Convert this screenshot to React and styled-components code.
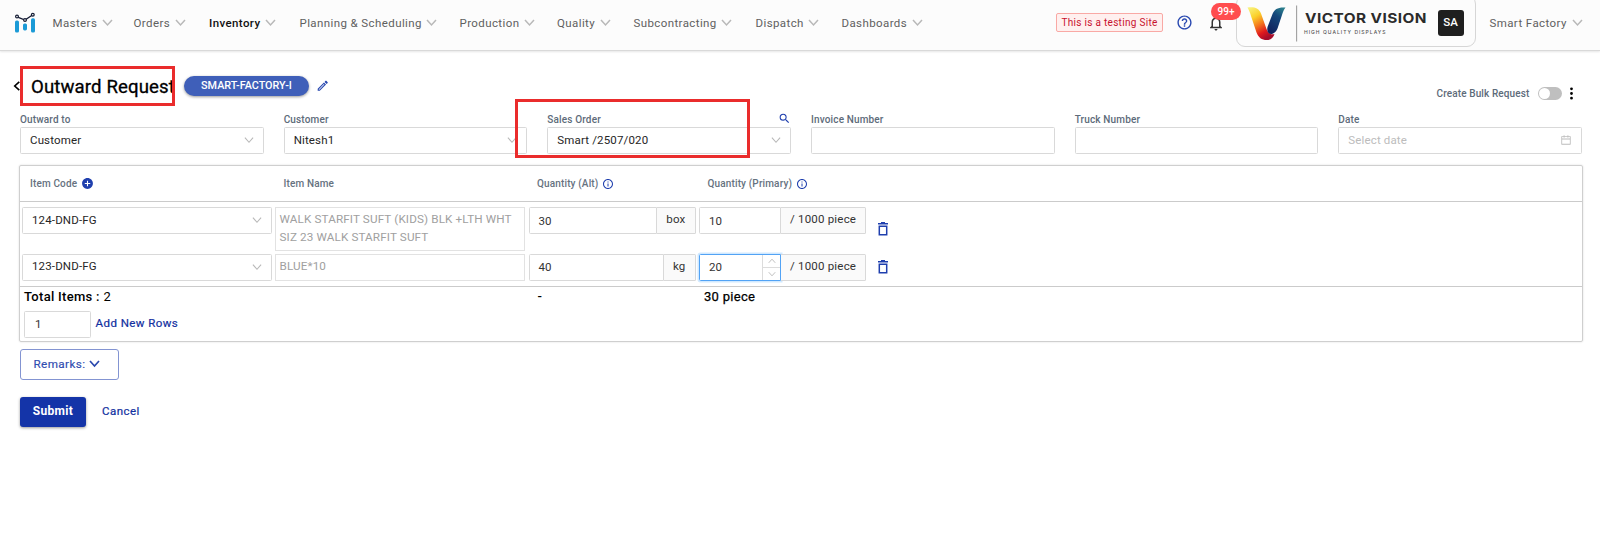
import styled, { createGlobalStyle, css } from "styled-components";
import { AiOutlineCalendar } from "react-icons/ai";
import { BsThreeDotsVertical } from "react-icons/bs";
import { MdAddCircle, MdOutlineEdit, MdSearch, MdHelpOutline, MdInfoOutline, MdNotificationsNone } from "react-icons/md";

const menus = [
    { name: "Masters", width: 81 },
    { name: "Orders", width: 75.5 },
    { name: "Inventory", width: 90.5, active: true },
    { name: "Planning & Scheduling", width: 160 },
    { name: "Production", width: 97.5 },
    { name: "Quality", width: 76.5 },
    { name: "Subcontracting", width: 122 },
    { name: "Dispatch", width: 86 },
    { name: "Dashboards", width: 85 },
];

const items = [
    {
        code: "124-DND-FG",
        name: "WALK STARFIT SUFT (KIDS) BLK +LTH WHT SIZ 23 WALK STARFIT SUFT",
        alt: "30",
        unit: "box",
        primary: "10",
        tall: true,
    },
    { code: "123-DND-FG", name: "BLUE*10", alt: "40", unit: "kg", primary: "20", focused: true },
];

function Chevron({ size = 11, color = "#b8b8b8", stroke = 1.2, up }) {
    return (
        <svg width={size} height={size} viewBox="0 0 11 11" fill="none" stroke={color} strokeWidth={stroke}>
            <path d={up ? "M1 8L5.5 3L10 8" : "M1 3L5.5 8L10 3"} />
        </svg>
    );
}

function Logo() {
    return (
        <svg width="22" height="22" viewBox="0 0 22 22">
            <g fill="#1b9ad6">
                <rect x="1" y="8.6" width="4" height="12" rx="1.6" />
                <rect x="9" y="11.4" width="4" height="7" rx="1.6" />
                <rect x="17" y="6.2" width="4" height="14.4" rx="1.6" />
            </g>
            <path d="M3 4.8L11 8L18.8 2.8" fill="none" stroke="#141b33" strokeWidth="1.3" />
            <g fill="#fff" stroke="#141b33" strokeWidth="1.2">
                <circle cx="3" cy="4.6" r="1.4" />
                <circle cx="11" cy="8" r="1.4" />
                <circle cx="18.8" cy="2.8" r="1.4" />
            </g>
        </svg>
    );
}

function CompanyLogo() {
    return (
        <svg width="184" height="40" viewBox="0 0 184 40">
            <defs>
                <linearGradient id="warm" x1="0.1" y1="0" x2="0.6" y2="1">
                    <stop offset="0" stopColor="#f8f27c" />
                    <stop offset="0.3" stopColor="#fbd02a" />
                    <stop offset="0.55" stopColor="#f47a1e" />
                    <stop offset="0.8" stopColor="#e01a1e" />
                    <stop offset="1" stopColor="#a50c2b" />
                </linearGradient>
                <linearGradient id="cool" x1="0.8" y1="0" x2="0.3" y2="1">
                    <stop offset="0" stopColor="#2b7f8c" />
                    <stop offset="0.35" stopColor="#15487c" />
                    <stop offset="1" stopColor="#10205c" />
                </linearGradient>
            </defs>
            <path d="M1.500 4.500C8 3.500 13 5 15 10.500L20.500 26C22 30 24.500 32 28.500 31C27.500 34.500 25 37 21 37C15.500 37 12.500 34.500 10.500 29.500L5 13C4 9.500 3 7 1.500 4.500Z" fill="url(#warm)" />
            <path d="M39.500 4.500C32 4 28.500 6 26.500 11L21.500 24C20.500 28.500 22.500 31.500 26 31C29 30 30.500 28 31.500 25.500L36 12C37 8.500 38 6.500 39.500 4.500Z" fill="url(#cool)" />
            <path d="M50.600 2.500V38.500" stroke="#a0a0a0" strokeWidth="1.1" />
            <text x="59" y="19.500" textLength="122" lengthAdjust="spacingAndGlyphs" fontFamily="Inter" fontWeight="700" fontSize="13.600" fill="#2b2b2b">VICTOR VISION</text>
            <text x="58" y="31" textLength="82" lengthAdjust="spacing" fontFamily="Inter" fontWeight="500" fontSize="5" fill="#555">HIGH QUALITY DISPLAYS</text>
        </svg>
    );
}

function TrashIcon() {
    return (
        <svg width="10" height="14" viewBox="0 0 10 14" fill="none" stroke="#1f3fae" strokeWidth="1.5">
            <path d="M0 1.800H10M3 0.700H7" />
            <path d="M1.300 4.200H8.700V12.800H1.300Z" />
        </svg>
    );
}

function Header() {
    return (
        <HeaderBar>
            <Brand><Logo /></Brand>
            <Nav>
                {menus.map((menu) => (
                    <NavItem key={menu.name} $width={menu.width} $active={menu.active}>
                        {menu.name}
                        <Chevron stroke={1.5} />
                    </NavItem>
                ))}
            </Nav>
            <TestTag>This is a testing Site</TestTag>
            <HelpIcon><MdHelpOutline /></HelpIcon>
            <Bell>
                <MdNotificationsNone />
                <Count>99+</Count>
            </Bell>
            <Company>
                <CompanyLogo />
                <Avatar>SA</Avatar>
            </Company>
            <Account>
                Smart Factory
                <Chevron stroke={1.5} />
            </Account>
        </HeaderBar>
    );
}

function SelectField({ label, value, search }) {
    return (
        <Field>
            <Label>
                {label}
                {search && <MdSearch />}
            </Label>
            <Control>
                {value}
                <Chevron size={10} />
            </Control>
        </Field>
    );
}

function App() {
    return (
        <Page>
            <GlobalStyle />
            <Header />
            <TitleRow>
                <BackIcon>
                    <Chevron size={10} color="#000" stroke={1.8} />
                </BackIcon>
                <Title>
                    Outward Request
                    <Highlight $top={0} $left={-11} $width={155} $height={40} />
                </Title>
                <Chip>SMART-FACTORY-I</Chip>
                <EditIcon><MdOutlineEdit /></EditIcon>
                <Bulk>
                    Create Bulk Request
                    <Toggle />
                    <BsThreeDotsVertical />
                </Bulk>
            </TitleRow>

            <Fields>
                <SelectField label="Outward to" value="Customer" />
                <SelectField label="Customer" value="Nitesh1" />
                <HighlightedField>
                    <SelectField label="Sales Order" value="Smart /2507/020" search />
                    <Highlight $top={-13} $left={-32} $width={235} $height={59} />
                </HighlightedField>
                <Field>
                    <Label>Invoice Number</Label>
                    <Control />
                </Field>
                <Field>
                    <Label>Truck Number</Label>
                    <Control />
                </Field>
                <Field>
                    <Label>Date</Label>
                    <Control $placeholder>
                        Select date
                        <AiOutlineCalendar size={12} />
                    </Control>
                </Field>
            </Fields>

            <Table>
                <TableHead>
                    <HeadCell $pad={8}>Item Code <MdAddCircle size={13} /></HeadCell>
                    <HeadCell $pad={8.5}>Item Name</HeadCell>
                    <HeadCell $pad={8.5}>Quantity (Alt) <MdInfoOutline size={12} /></HeadCell>
                    <HeadCell $pad={8.5}>Quantity (Primary) <MdInfoOutline size={12} /></HeadCell>
                </TableHead>
                <TableBody>
                    {items.map((item) => (
                        <Row key={item.code}>
                            <Control>
                                {item.code}
                                <Chevron size={10} />
                            </Control>
                            <ItemName $tall={item.tall}>{item.name}</ItemName>
                            <Group>
                                <Quantity>{item.alt}</Quantity>
                                <Addon>{item.unit}</Addon>
                            </Group>
                            <Group>
                                <Quantity $focused={item.focused}>
                                    {item.primary}
                                    {item.focused && (
                                        <Stepper>
                                            <Step><Chevron size={8} up /></Step>
                                            <Step><Chevron size={8} /></Step>
                                        </Stepper>
                                    )}
                                </Quantity>
                                <Addon $wide>/ 1000 piece</Addon>
                            </Group>
                            <Remove><TrashIcon /></Remove>
                        </Row>
                    ))}
                </TableBody>
                <Totals>
                    <TotalCell $pad={2}><b>Total Items :</b> 2</TotalCell>
                    <TotalCell />
                    <TotalCell $pad={9}><b>-</b></TotalCell>
                    <TotalCell $pad={5} $strong>30 piece</TotalCell>
                </Totals>
                <AddRows>
                    <RowCount>1</RowCount>
                    <TextButton>Add New Rows</TextButton>
                </AddRows>
            </Table>

            <Remarks>
                Remarks:
                <Chevron size={11} color="#2a48ae" stroke={1.7} />
            </Remarks>
            <Actions>
                <Submit>Submit</Submit>
                <TextButton $cancel>Cancel</TextButton>
            </Actions>
        </Page>
    );
}

export default App;


const GlobalStyle = createGlobalStyle`
* {
    box-sizing: border-box;
}

body {
    margin: 0;
    background: #fff;
    font-family: Roboto, "Liberation Sans", sans-serif;
}

svg {
    display: block;
    flex-shrink: 0;
}
`

const Page = styled.main`
    height: 553px;
    overflow: hidden;
`

const HeaderBar = styled.header`
    display: flex;
    align-items: center;
    height: 51px;
    padding-bottom: 5px;
    background: #fcfcfc;
    border-bottom: 1px solid #d9d9d9;
    box-shadow: 0 1px 2px rgba(0, 0, 0, 0.1);
    color: #606060;
    font-size: 11.5px;
    letter-spacing: 0.4px;
    white-space: nowrap;
`

const Brand = styled.div`
    width: 52.5px;
    padding-left: 14px;
`

const Nav = styled.nav`
    display: flex;
`

const NavItem = styled.a`
    display: flex;
    align-items: center;
    gap: 4.5px;
    width: ${(p) => p.$width}px;

    ${(p) => p.$active && css`
        color: #111;
        font-weight: 500;
    `}
`

const TestTag = styled.div`
    width: 107px;
    height: 19px;
    margin-left: 129.5px;
    border: 1px solid #f9a9a5;
    border-radius: 2px;
    background: #fff0ef;
    color: #c8102e;
    font-size: 10px;
    line-height: 17px;
    text-align: center;
    letter-spacing: 0.3px;
`

const HelpIcon = styled.div`
    margin-left: 13px;
    color: #2848b0;
    font-size: 17px;
`

const Bell = styled.div`
    position: relative;
    width: 18px;
    margin-left: 14px;
    color: #333;
    font-size: 18px;
`

const Count = styled.span`
    position: absolute;
    top: -11px;
    left: 4px;
    width: 30px;
    height: 17px;
    border-radius: 9px;
    background: #ff4d4f;
    color: #fff;
    font-size: 10px;
    font-weight: 500;
    line-height: 17px;
    text-align: center;
    letter-spacing: 0;
`

const Company = styled.div`
    display: flex;
    align-items: center;
    width: 240px;
    height: 52px;
    margin: -4px 0 0 11px;
    padding: 4px 0 0 9px;
    border: 1.5px solid #d6d6d6;
    border-radius: 9px;
`

const Avatar = styled.div`
    width: 26px;
    height: 26px;
    margin-left: 7.5px;
    border-radius: 3px;
    background: #1f1f1f;
    color: #fff;
    font-size: 11.5px;
    font-weight: 500;
    line-height: 25px;
    text-align: center;
    letter-spacing: 0;
`

const Account = styled.div`
    display: flex;
    align-items: center;
    gap: 5px;
    margin-left: 13.5px;
`

const TitleRow = styled.div`
    display: flex;
    align-items: center;
    height: 40px;
    margin: 15px 18px 0 12px;
`

const BackIcon = styled.div`
    transform: rotate(90deg);
`

const Title = styled.h1`
    position: relative;
    width: 153px;
    height: 40px;
    margin: 0 0 0 9px;
    color: #000;
    font-size: 18.6px;
    font-weight: 400;
    line-height: 42px;
    letter-spacing: 0.12px;
    white-space: nowrap;
    -webkit-text-stroke: 0.3px;
`

/* red marker frames drawn over the form */
const Highlight = styled.div`
    position: absolute;
    top: ${(p) => p.$top}px;
    left: ${(p) => p.$left}px;
    width: ${(p) => p.$width}px;
    height: ${(p) => p.$height}px;
    border: 3.5px solid #ea2c2c;
    pointer-events: none;
`

const Chip = styled.div`
    width: 125px;
    height: 20px;
    border-radius: 10px;
    background: #3f5fb9;
    box-shadow: 0 1px 3px rgba(0, 0, 0, 0.4);
    color: #fff;
    font-size: 10.8px;
    font-weight: 500;
    line-height: 19px;
    text-align: center;
`

const EditIcon = styled.div`
    margin-left: 7px;
    color: #2848b0;
    font-size: 13.5px;
`

const Bulk = styled.div`
    display: flex;
    align-items: center;
    margin: 14px 3px 0 auto;
    color: #5d6b7a;
    font-size: 10px;
    font-weight: 500;
    letter-spacing: 0.12px;

    svg {
        margin-left: 2px;
        color: #000;
        font-size: 15px;
    }
`

const Toggle = styled.div`
    width: 24px;
    height: 13px;
    margin-left: 8.5px;
    border-radius: 7px;
    background: #bfbfbf;

    &::after {
        content: "";
        display: block;
        width: 11px;
        height: 11px;
        margin: 1px;
        border-radius: 50%;
        background: #fff;
    }
`

const Fields = styled.section`
    display: grid;
    grid-template-columns: repeat(6, 1fr);
    gap: 20px;
    margin: 6px 18px 0 20px;
`

const Field = styled.div`
    min-width: 0;
`

const HighlightedField = styled.div`
    position: relative;
`

const Label = styled.label`
    display: flex;
    justify-content: space-between;
    align-items: center;
    height: 15px;
    color: #5d6b7a;
    font-size: 10px;
    font-weight: 500;
    letter-spacing: 0.15px;

    svg {
        margin: -3px 0 0 0;
        color: #1f3fae;
        font-size: 13px;
    }
`

const Control = styled.div`
    display: flex;
    justify-content: space-between;
    align-items: center;
    height: 27px;
    padding: 0 9px 2px;
    border: 1px solid #d9d9d9;
    border-radius: 1.5px;
    background: #fff;
    color: ${(p) => (p.$placeholder ? "#bcbcbc" : "#262626")};
    font-size: 11.5px;
    letter-spacing: 0.15px;

    svg {
        margin-top: 1px;
    }
`

const Table = styled.section`
    height: 177px;
    margin: 11px 17.5px 0 19px;
    border: 1px solid #cfcfcf;
    border-radius: 2px;
    box-shadow: 0 0 2px rgba(0, 0, 0, 0.16);
`

const columns = css`
    display: grid;
    grid-template-columns: 249.5px 250px 167px 167px 32px;
    column-gap: 3.5px;
    padding-left: 2px;
`

const TableHead = styled.div`
    ${columns}
    height: 36px;
    border-bottom: 1px solid #cbcbcb;
`

const HeadCell = styled.div`
    display: flex;
    align-items: center;
    gap: 4px;
    padding-left: ${(p) => p.$pad}px;
    color: #66727f;
    font-size: 10px;
    font-weight: 500;
    letter-spacing: 0.14px;

    svg {
        color: #1f3fae;
    }
`

const TableBody = styled.div`
    display: grid;
    row-gap: 3px;
    padding: 5px 0;
    border-bottom: 1px solid #cbcbcb;
`

const Row = styled.div`
    ${columns}
    align-items: start;
`

const ItemName = styled.div`
    height: ${(p) => (p.$tall ? 43.5 : 27)}px;
    padding: 3px 0 0 3.5px;
    border: 1px solid #e2e2e2;
    color: #a0a0a0;
    font-size: 11.7px;
    line-height: 17.6px;
    letter-spacing: 0.13px;
    overflow: hidden;
`

const Group = styled.div`
    display: flex;
    height: 27px;
`

const Quantity = styled.div`
    display: flex;
    flex: 1;
    justify-content: space-between;
    align-items: center;
    padding-left: 9px;
    border: 1px solid #d9d9d9;
    border-radius: 1.5px 0 0 1.5px;
    color: #333;
    font-size: 11.5px;
    letter-spacing: 0.15px;

    ${(p) => p.$focused && css`
        border-color: #52a3f5;
        box-shadow: 0 0 0 1.5px rgba(24, 144, 255, 0.2);
    `}
`

const Addon = styled.div`
    width: ${(p) => (p.$wide ? "85px" : "auto")};
    padding: 0 9px;
    border: 1px solid #d9d9d9;
    border-left: 0;
    border-radius: 0 1.5px 1.5px 0;
    background: #fafafa;
    color: #333;
    font-size: 11.5px;
    line-height: 23px;
    letter-spacing: 0.2px;
    white-space: nowrap;
`

const Stepper = styled.div`
    width: 18px;
    height: 100%;
    border-left: 1px solid #dcdcdc;
`

const Step = styled.div`
    display: flex;
    align-items: center;
    justify-content: center;
    height: 50%;

    & + & {
        border-top: 1px solid #dcdcdc;
    }
`

const Remove = styled.div`
    display: flex;
    align-items: center;
    align-self: center;
    padding-left: 8px;
`

const Totals = styled.div`
    ${columns}
    height: 19px;
    color: #000;
    font-size: 13px;
    line-height: 19px;
`

const TotalCell = styled.div`
    padding-left: ${(p) => p.$pad || 0}px;
    letter-spacing: 0.3px;
    -webkit-text-stroke: ${(p) => (p.$strong ? 0.25 : 0)}px;

    b {
        font-weight: 500;
    }
`

const AddRows = styled.div`
    display: flex;
    align-items: center;
    gap: 4.5px;
    margin: 5px 0 0 4px;
`

const RowCount = styled.div`
    width: 67px;
    height: 27px;
    padding-left: 10px;
    border: 1px solid #d9d9d9;
    border-radius: 1.5px;
    color: #333;
    font-size: 11.5px;
    line-height: 25px;
`

const TextButton = styled.button`
    padding: 0 0 2px;
    border: 0;
    background: none;
    color: #1230a0;
    font-family: inherit;
    font-size: 11.5px;
    letter-spacing: 0.45px;
    -webkit-text-stroke: 0.2px;
`

const Remarks = styled.button`
    display: flex;
    align-items: center;
    gap: 4px;
    width: 98.5px;
    height: 31px;
    margin: 7px 0 0 20px;
    padding: 0 0 2px 12.5px;
    border: 1px solid #8394d2;
    border-radius: 3px;
    background: #fff;
    color: #2f4cb0;
    font-family: inherit;
    font-size: 11.7px;
    letter-spacing: 0.4px;
    -webkit-text-stroke: 0.15px;
`

const Actions = styled.div`
    display: flex;
    align-items: center;
    gap: 16px;
    margin: 17px 0 0 20px;
`

const Submit = styled.button`
    width: 66px;
    height: 30px;
    padding: 0 0 2px;
    border: 0;
    border-radius: 3px;
    background: #1434a8;
    box-shadow: 0 1px 3px rgba(0, 0, 0, 0.4);
    color: #fff;
    font-family: inherit;
    font-size: 12px;
    font-weight: 700;
    letter-spacing: 0.3px;
`
